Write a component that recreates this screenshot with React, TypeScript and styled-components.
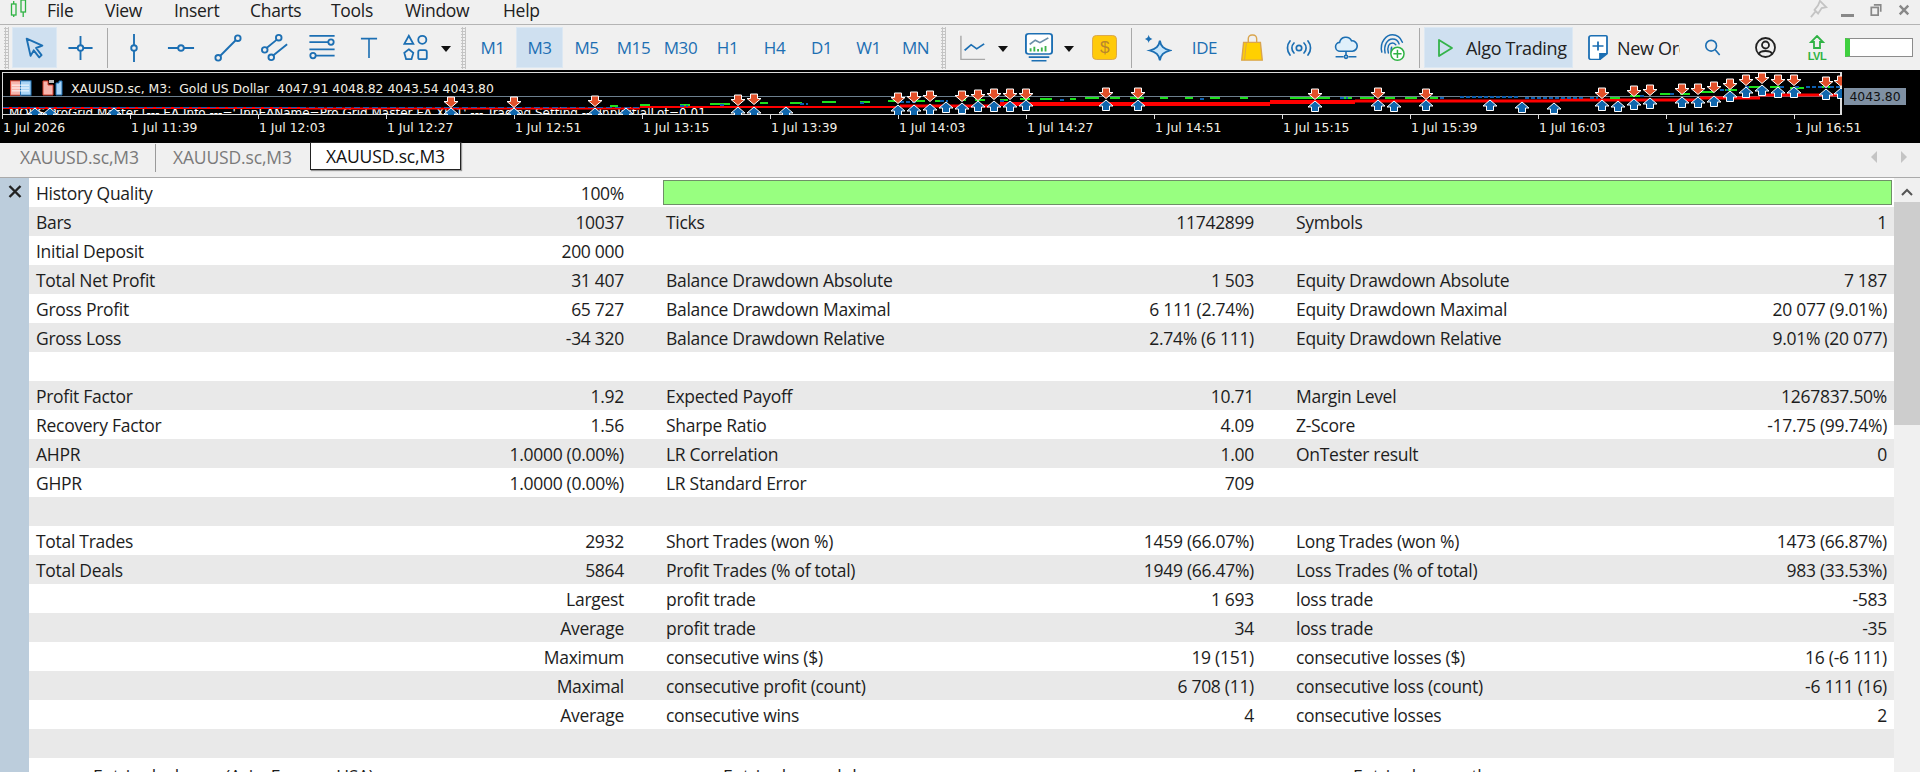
import React from "react";
import styled, { createGlobalStyle } from "styled-components";

const Global = createGlobalStyle`
  html, body { margin: 0; padding: 0; height: 772px; overflow: hidden; background: #f0f0f0; }
  #root { height: 772px; overflow: hidden; }
`;
const UI = `"Open Sans", "Noto Sans", sans-serif`;
const Page = styled.div`
  width: 1920px; height: 772px; overflow: hidden; display: flex; flex-direction: column;
  background: #f0f0f0; font-family: ${UI}; color: #1b1b1b;
`;
/* Menu */
const MenuBar = styled.div`
  height: 24px; flex: none; display: flex; align-items: center; position: relative; border-bottom: 1px solid #b4b4b4; background: #f0f0f0;
`;
const Logo = styled.svg` position: absolute; left: 10px; top: 0; `;
const MenuItem = styled.span<{ $w: number }>`
  flex: none; width: ${p => p.$w}px; font-size: 17.5px; letter-spacing: -0.3px; line-height: 19px; color: #202020;
`;
const MenuItems = styled.div` display: flex; padding-left: 47px; margin-top: -3px; `;
const WinBtns = styled.div` margin-left: auto; display: flex; align-items: center; gap: 16px; padding-right: 10px; margin-top: -4px; `;
const PinIcon = styled.svg` margin-right: -4px; margin-top: -2px; `;
/* Toolbar */
const Toolbar = styled.div`
  height: 45px; flex: none; display: flex; align-items: center; background: #f0f0f0;
`;
const Grip = styled.div<{ $l: number; $r: number }>`
  flex: none; width: 5px; height: 42px; margin: 0 ${p => p.$r}px 0 ${p => p.$l}px;
  background-image: radial-gradient(circle, #c4c4c4 1px, transparent 1.1px);
  background-size: 3px 3px;
`;
const Sep = styled.div`
  flex: none; width: 1px; height: 40px; margin: 0 2.5px; background: #a9a9a9;
`;
const Btn = styled.div<{ $w?: number; $active?: boolean; $mr?: number }>`
  flex: none; width: ${p => p.$w ?? 47}px; height: 41px; margin-right: ${p => p.$mr ?? 0}px;
  display: flex; align-items: center; justify-content: center;
  background: ${p => (p.$active ? "#cfe0f0" : "transparent")};
  box-shadow: ${p => (p.$active ? "inset 0 0 0 1px #dce8f3" : "none")};
  color: #1c6fb3; font-size: 17px; letter-spacing: -0.42px;
`;
const Caret = styled.div<{ $mr?: number }>`
  flex: none; width: 14px; margin-right: ${p => p.$mr ?? 0}px; display: flex; justify-content: center; margin-top: 2px;
  &::before { content: ""; border-left: 5.5px solid transparent; border-right: 5.5px solid transparent; border-top: 6px solid #111; }
`;
const AlgoBtn = styled.div`
  flex: none; width: 149px; height: 41px; margin-left: 2px; box-sizing: border-box; padding-left: 13px; gap: 12px;
  display: flex; align-items: center; background: #cfe0f0; box-shadow: inset 0 0 0 1px #dce8f3;
  font-size: 18px; letter-spacing: -0.35px; color: #222; white-space: nowrap;
`;
const OrderBtn = styled.div`
  flex: none; width: 114px; margin-left: 2px; padding-left: 13px; box-sizing: border-box; height: 41px; overflow: hidden;
  display: flex; align-items: center; gap: 9px; font-size: 18px; letter-spacing: -0.3px; color: #222; white-space: nowrap;
`;
const OrderClip = styled.span` display: block; width: 63px; overflow: hidden; `;
const LevelBar = styled.div`
  flex: none; width: 68px; height: 19px; box-sizing: border-box; border: 1px solid #8c8c8c; background: #fff; margin-left: 6px; border-left: 5px solid #3fd03f;
`;
/* Chart */
const Chart = styled.div`
  height: 73px; flex: none; background: #000; position: relative; overflow: hidden;
  font-family: "DejaVu Sans", sans-serif; font-size: 12.4px; color: #f4f0e6;
`;
const Plot = styled.div`
  margin: 2px 0 0 2px; width: 1840px; height: 43px; box-sizing: border-box; border: 1px solid #dcdcdc; border-right-width: 2px; position: relative; overflow: hidden;
`;
const ChartHead = styled.div`
  display: flex; align-items: center; height: 22px; margin-top: 4px; padding-left: 7px; white-space: pre; position: relative; z-index: 2;
`;
const HeadIcon = styled.svg<{ $mr: number }>` flex: none; margin-right: ${p => p.$mr}px; `;
const Ea = styled.div`
  position: absolute; left: 6px; top: 33px; white-space: pre; line-height: 14px; font-size: 12px; color: #fff;
`;
const Lines = styled.svg` position: absolute; left: 0; top: 0; `;
const PriceTag = styled.div`
  position: absolute; left: 1844px; top: 18px; width: 62px; height: 17px; background: #7f90a3; color: #111;
  font-size: 12.4px; line-height: 17px; text-align: center;
`;
const Axis = styled.div`
  display: flex; height: 28px; margin-left: 2px;
`;
const Tick = styled.div`
  flex: none; width: 128px; box-sizing: border-box; position: relative; padding: 6px 0 0 1px; white-space: nowrap; line-height: 14px;
  &::before { content: ""; position: absolute; left: 0; top: 0; width: 1px; height: 4px; background: #dcdcdc; }
`;
/* Tabs */
const TabBar = styled.div`
  height: 34px; flex: none; display: flex; align-items: flex-start; position: relative; border-bottom: 1px solid #aaa; background: #f0f0f0;
  font-size: 17.5px; letter-spacing: -0.15px;
`;
const Tab = styled.div<{ $w: number; $pl: number; $sep?: boolean }>`
  flex: none; width: ${p => p.$w}px; height: 28px; box-sizing: border-box; padding-left: ${p => p.$pl}px; line-height: 27px; color: #7a7a7a; margin-top: 1px;
  border-right: ${p => (p.$sep ? "1px solid #9a9a9a" : "1px solid transparent")};
`;
const ActiveTab = styled.div`
  flex: none; width: 151px; height: 28px; box-sizing: border-box; margin: -1px 0 0 0; text-align: center; line-height: 26px; background: #fff; color: #111;
  border: 1px solid #222; box-shadow: 1px 1px 1px #999;
`;
const TabArrows = styled.div` margin-left: auto; display: flex; gap: 22px; padding: 8px 13px 0 0; `;
/* Report */
const Body = styled.div` flex: 1; min-height: 0; display: flex; background: #fff; overflow: hidden; `;
const Side = styled.div`
  flex: none; width: 29px; background: #bccddc; position: relative;
`;
const CloseX = styled.svg` position: absolute; left: 8px; top: 7px; `;
const Report = styled.div` flex: 1; min-width: 0; `;
const Row = styled.div<{ $shade?: boolean }>`
  height: 29px; display: grid; grid-template-columns: 630px 630px 1fr; background: ${p => (p.$shade ? "#e9e9e9" : "#fff")};
  font-size: 17.5px; letter-spacing: -0.29px; line-height: 31px; color: #1d1d1d;
`;
const Cell = styled.div<{ $last?: boolean }>`
  display: flex; justify-content: space-between; padding: 0 ${p => (p.$last ? 7 : 35)}px 0 7px; white-space: nowrap; min-width: 0;
`;
const QualityBar = styled.div`
  grid-column: 2 / 4; margin: 2px 2px 2px 4px; background: #98ff80; border: 1px solid #6f8f68; box-sizing: border-box; height: 25px;
`;
const SectionTitle = styled.div`
  padding-left: 64px; white-space: nowrap; line-height: 37px;
`;
const Scroll = styled.div`
  flex: none; width: 26px; background: #f0f0f0; display: flex; flex-direction: column; align-items: center;
`;
const ScrollUp = styled.svg` flex: none; margin: 10px 0 6px; `;
const Thumb = styled.div` width: 100%; height: 223px; background: #cdcdcd; `;

const blue = "#1c6fb3";
const I = styled.svg` display: block; flex: none; `;

const Cursor = () => <I width="21" height="22" viewBox="0 0 26 28" fill="none" stroke={blue} strokeWidth="2.4" strokeLinejoin="round"><path d="M3 2 L23 11 L15 14 L22 23 L19 26 L12 17 L8 24 Z" /></I>;
const Cross = () => <I width="25" height="26" viewBox="0 0 26 28" fill="none" stroke={blue} strokeWidth="2"><circle cx="13" cy="14" r="3" /><path d="M0 14h10M16 14h10M13 1v10M13 17v10" /></I>;
const VLine = () => <I width="12" height="28" viewBox="0 0 12 30" fill="none" stroke={blue} strokeWidth="2"><circle cx="6" cy="15" r="3" /><path d="M6 0v12M6 18v12" /></I>;
const HLine = () => <I width="28" height="12" viewBox="0 0 30 12" fill="none" stroke={blue} strokeWidth="2"><circle cx="15" cy="6" r="3" /><path d="M1 6h11M18 6h11" /></I>;
const Trend = () => <I width="28" height="28" viewBox="0 0 30 30" fill="none" stroke={blue} strokeWidth="2"><circle cx="4.5" cy="25.5" r="3" /><circle cx="25.5" cy="4.5" r="3" /><path d="M7 23 L23 7" /></I>;
const Channel = () => <I width="28" height="28" viewBox="0 0 30 30" fill="none" stroke={blue} strokeWidth="2"><circle cx="4" cy="17" r="3" /><circle cx="19" cy="4" r="3" /><circle cx="11" cy="25" r="3" /><path d="M6 15 L17 6M13 23 L28 11" /></I>;
const Fibo = () => <I width="28" height="27" viewBox="0 0 30 30" fill="none" stroke={blue} strokeWidth="2"><circle cx="25" cy="9" r="3" /><circle cx="5" cy="24" r="3" /><path d="M1 2h28M1 9h21M1 17h28M8 24h21" /></I>;
const TextT = () => <I width="20" height="21" viewBox="0 0 22 26" fill="none" stroke={blue} strokeWidth="2"><path d="M1 2h20M11 2v24" /></I>;
const Shapes = () => <I width="26" height="27" viewBox="0 0 28 30" fill="none" stroke={blue} strokeWidth="2"><path d="M6 2 L11 11 L1 11 Z" /><circle cx="21" cy="6.5" r="4.5" /><path d="M6 17 L11 21 L9 28 L3 28 L1 21 Z" /><rect x="16.5" y="18" width="9.5" height="10" rx="2" /></I>;
const LineChart = () => <I width="26" height="26" viewBox="0 0 28 32" fill="none" preserveAspectRatio="none"><path d="M1 1v29h26" stroke="#a8a8a8" strokeWidth="1.5" /><path d="M5 19 L12 12 L18 17 L26 11" stroke={blue} strokeWidth="2" /></I>;
const Monitor = () => <I width="28" height="29" viewBox="0 0 30 36" fill="none" preserveAspectRatio="none"><rect x="1" y="1" width="28" height="25" rx="3" fill="#fff" stroke={blue} strokeWidth="2" /><path d="M5 14 L11 9 L16 12 L25 6" stroke="#6a8fa8" strokeWidth="2" /><path d="M6 23v-4M10 23v-6M14 23v-3M18 23v-5M22 23v-7" stroke="#3fb54a" strokeWidth="2" /><path d="M4 30h22M7 34.500h16" stroke={blue} strokeWidth="2" /></I>;
const Dollar = () => <I width="25" height="25" viewBox="0 0 26 26"><rect x="0.5" y="0.5" width="25" height="25" rx="4" fill="#ffca0a" stroke="#d9a54e" /><text x="13" y="19" textAnchor="middle" fontFamily="Liberation Sans" fontSize="18" fill="#b8862c">$</text></I>;
const Sparkle = () => <I width="28" height="28" viewBox="0 0 30 34" preserveAspectRatio="none"><path d="M17 8 C18 15 21 18 28 20 C21 22 18 25 17 32 C16 25 13 22 6 20 C13 18 16 15 17 8 Z" fill="#c5e5fb" stroke={blue} strokeWidth="2" /><path d="M5 1 C5.500 4 6.500 5 9 6 C6.500 7 5.500 8 5 11 C4.500 8 3.500 7 1 6 C3.500 5 4.500 4 5 1 Z" fill={blue} /></I>;
const Bag = () => <I width="24" height="28" viewBox="0 0 24 30" fill="none"><path d="M3 9 L21 9 L23 28 L1 28 Z" fill="#ffd000" stroke="#d9a54e" strokeWidth="1.500" /><path d="M6 9 L4 28" stroke="#d9a54e" /><path d="M8 9V5a4 4 0 0 1 4-4h1a4 4 0 0 1 4 4v4" stroke="#d9a54e" strokeWidth="1.500" /></I>;
const Signal = () => <I width="26" height="16" viewBox="0 0 26 16" fill="none" stroke={blue} strokeWidth="1.700" strokeLinecap="round"><circle cx="13" cy="8" r="2.700" /><path d="M8 3a7 7 0 0 0 0 10M18 3a7 7 0 0 1 0 10M4 1a11 11 0 0 0 0 14M22 1a11 11 0 0 1 0 14" /></I>;
const Cloud = () => <I width="26" height="24" viewBox="0 0 28 30" fill="none" stroke={blue} strokeWidth="2"><path d="M7 19 a5.500 5.500 0 0 1 -1 -11 a8 8 0 0 1 15 -2 a6.500 6.500 0 0 1 1 13 Z" fill="#dff0fb" /><path d="M14 19v6M1 26h10M17 26h10" /><circle cx="14" cy="26" r="2" /></I>;
const Finger = () => <I width="27" height="28" viewBox="0 0 30 34" fill="none"><g stroke={blue} strokeWidth="1.800" strokeLinecap="round"><path d="M2 22 C-1 9 8 1 15 1 C21 1 25 5 27 10" /><path d="M6 23 C4 13 9 6 15 6 C19 6 22 9 23 12" /><path d="M10 23 C8 15 11 11 15 11 C17 11 18 12 19 13" /><path d="M14 25 C13 20 13 18 14 16" /></g><circle cx="21" cy="24" r="8" fill="#fff" stroke="#2fb344" strokeWidth="1.800" /><path d="M21 19v10M16 24h10" stroke="#2fb344" strokeWidth="1.800" /></I>;
const Play = () => <I width="17" height="20" viewBox="0 0 17 20" fill="none"><path d="M2 2 L15 10 L2 18 Z" stroke="#34b34a" strokeWidth="1.800" strokeLinejoin="round" /></I>;
const NewOrder = () => <I width="20" height="26" viewBox="0 0 20 32" fill="none" stroke={blue} strokeWidth="1.800" preserveAspectRatio="none"><path d="M3 1h15a1 1 0 0 1 1 1v21l-7 7H3a2 2 0 0 1-2-2V3a2 2 0 0 1 2-2Z" fill="#fff" /><path d="M19 23h-7v7" fill={blue} /><path d="M10 8v11M4.500 13.500h11" /></I>;
const Search = () => <I width="17" height="17" viewBox="0 0 18 19" fill="none" stroke={blue} strokeWidth="1.800"><circle cx="7.500" cy="7.500" r="6" /><path d="M12 12 L17 18" /></I>;
const User = () => <I width="21" height="21" viewBox="0 0 21 21" fill="none" stroke="#222" strokeWidth="1.800"><circle cx="10.500" cy="10.500" r="9.500" /><circle cx="10.500" cy="8" r="3.500" /><path d="M4 17 C5 13 16 13 17 17" /></I>;
const Lvl = () => <I width="22" height="25" viewBox="0 0 22 25"><path d="M11 1 L17 7 L14 7 L14 13 L8 13 L8 7 L5 7 Z" fill="none" stroke="#2fb344" strokeWidth="1.800" /><text x="11" y="24.500" textAnchor="middle" fontFamily="Liberation Sans" fontSize="11" fontWeight="700" fill="#2fb344">LVL</text></I>;
const CandleLogo = () => <Logo width="18" height="18" viewBox="0 0 18 18" fill="none" stroke="#2fb344" strokeWidth="1.300"><rect x="1.500" y="4" width="4.500" height="11" /><path d="M3.700 1v3M3.700 15v2" /><rect x="11" y="0" width="4.500" height="12" /><path d="M13.200 12v5" /></Logo>;

const Menus: [string, number][] = [["File", 58], ["View", 69], ["Insert", 76], ["Charts", 81], ["Tools", 74], ["Window", 98], ["Help", 50]];
const times = ["1 Jul 2026", "1 Jul 11:39", "1 Jul 12:03", "1 Jul 12:27", "1 Jul 12:51", "1 Jul 13:15", "1 Jul 13:39", "1 Jul 14:03", "1 Jul 14:27", "1 Jul 14:51", "1 Jul 15:15", "1 Jul 15:39", "1 Jul 16:03", "1 Jul 16:27", "1 Jul 16:51"];

type M = [number, number | null, number];
/* x, top of down arrow (null if none), top of up arrow — page coordinates */
const marks: M[] = [
  [35, null, 108], [50, null, 108], [114, null, 108], [451, 97, 108], [514, 97, 108], [595, 96, 108], [626, null, 108],
  [738, 95, 107], [754, 94, 107], [786, null, 107],
  [898, 93, 105], [914, 92, 105], [930, 91, 104], [946, null, 102], [962, 91, 103], [978, 90, 101], [994, 89, 101], [1010, 89, 101], [1026, 89, 100],
  [1106, 88, 100], [1138, 88, 100],
  [1315, 89, 101], [1378, 88, 100], [1394, null, 101], [1426, 89, 100], [1490, null, 100], [1522, null, 102], [1554, null, 103],
  [1602, 88, 100], [1618, null, 101], [1634, 86, 99], [1650, 85, 98], [1682, 84, 97], [1698, 84, 97], [1714, 82, 96], [1730, 79, 91], [1746, 75, 87], [1762, 73, 85], [1778, 75, 87], [1794, 75, 87], [1826, 77, 89], [1841, 76, 88],
];
const Down = ({ x, y }: { x: number; y: number }) => <path d={`M${x - 3.5} ${y}h7v4.500h3.500L${x} ${y + 10.5}L${x - 7} ${y + 4.5}h3.500Z`} fill="#e2502a" stroke="#fff" strokeWidth="1" />;
const Up = ({ x, y }: { x: number; y: number }) => <path d={`M${x} ${y}L${x + 7} ${y + 6}h-3.500v4.500h-7v-4.500H${x - 7}Z`} fill="#0f66ad" stroke="#fff" strokeWidth="1" />;

const greenDash = "M610 106h8M640 105h10M680 105h10M710 104h20M760 103h8M790 103h12M822 102h14M860 102h10M888 101h12M915 101h10M935 101h8M960 100h6M975 100h10M1000 100h8M1020 99h10M1040 99h12M1070 99h6M1085 98h14M1110 98h10M1130 98h14M1160 98h8M1185 98h8M1210 98h10M1240 98h8M1290 98h40M1340 98h12M1360 98h14M1385 98h10M1405 98h12M1430 98h8M1610 98h10M1630 96h12M1660 94h10M1680 94h10M1700 92h14M1725 90h12M1745 87h16M1770 87h12M1790 88h14M1820 87h14";
const blueDash = "M680 106h8M720 105h6M800 104h8M860 103h6M900 102h16M940 101h8M1000 101h5M1060 100h6M1200 99h6M1340 98h8M1440 98h5M1460 97h60M1525 98h60M1590 98h8M1640 96h6M1670 94h6M1695 92h6M1720 90h8M1745 87h4M1760 87h4M1780 87h4M1795 87h4M1806 87h36";

const R: [string, string, string, string, string, string][] = [
  ["Bars", "10037", "Ticks", "11742899", "Symbols", "1"],
  ["Initial Deposit", "200 000", "", "", "", ""],
  ["Total Net Profit", "31 407", "Balance Drawdown Absolute", "1 503", "Equity Drawdown Absolute", "7 187"],
  ["Gross Profit", "65 727", "Balance Drawdown Maximal", "6 111 (2.74%)", "Equity Drawdown Maximal", "20 077 (9.01%)"],
  ["Gross Loss", "-34 320", "Balance Drawdown Relative", "2.74% (6 111)", "Equity Drawdown Relative", "9.01% (20 077)"],
  ["", "", "", "", "", ""],
  ["Profit Factor", "1.92", "Expected Payoff", "10.71", "Margin Level", "1267837.50%"],
  ["Recovery Factor", "1.56", "Sharpe Ratio", "4.09", "Z-Score", "-17.75 (99.74%)"],
  ["AHPR", "1.0000 (0.00%)", "LR Correlation", "1.00", "OnTester result", "0"],
  ["GHPR", "1.0000 (0.00%)", "LR Standard Error", "709", "", ""],
  ["", "", "", "", "", ""],
  ["Total Trades", "2932", "Short Trades (won %)", "1459 (66.07%)", "Long Trades (won %)", "1473 (66.87%)"],
  ["Total Deals", "5864", "Profit Trades (% of total)", "1949 (66.47%)", "Loss Trades (% of total)", "983 (33.53%)"],
  ["", "Largest", "profit trade", "1 693", "loss trade", "-583"],
  ["", "Average", "profit trade", "34", "loss trade", "-35"],
  ["", "Maximum", "consecutive wins ($)", "19 (151)", "consecutive losses ($)", "16 (-6 111)"],
  ["", "Maximal", "consecutive profit (count)", "6 708 (11)", "consecutive loss (count)", "-6 111 (16)"],
  ["", "Average", "consecutive wins", "4", "consecutive losses", "2"],
  ["", "", "", "", "", ""],
];

export default function App() {
  return (
    <Page>
      <Global />
      <MenuBar>
        <CandleLogo />
        <MenuItems>{Menus.map(([m, w]) => <MenuItem key={m} $w={w}>{m}</MenuItem>)}</MenuItems>
        <WinBtns>
          <PinIcon width="20" height="18" viewBox="0 0 20 20" fill="none" stroke="#c4c4c4" strokeWidth="2"><path d="M11 1 L18 8 L13 9 L9 15 L5 11 L9 6 Z M6 13 L1 19" /></PinIcon>
          <svg width="13" height="14" viewBox="0 0 13 14"><rect x="0" y="11" width="13" height="3" fill="#888" /></svg>
          <svg width="12" height="12" viewBox="0 0 13 14" fill="none" stroke="#888" strokeWidth="2"><rect x="1" y="4" width="8" height="9" /><path d="M4 1h8v8" /></svg>
          <svg width="12" height="12" viewBox="0 0 14 14" stroke="#888" strokeWidth="2.800"><path d="M2 2 L12 12 M12 2 L2 12" /></svg>
        </WinBtns>
      </MenuBar>
      <Toolbar>
        <Grip $l={4} $r={3} />
        <Btn $w={45} $active><Cursor /></Btn>
        <Btn><Cross /></Btn>
        <Sep />
        <Btn><VLine /></Btn><Btn><HLine /></Btn><Btn><Trend /></Btn><Btn><Channel /></Btn><Btn><Fibo /></Btn><Btn><TextT /></Btn><Btn><Shapes /></Btn>
        <Caret />
        <Grip $l={8} $r={3} />
        {["M1", "M3", "M5", "M15", "M30", "H1", "H4", "D1", "W1", "MN"].map(t => <Btn key={t} $w={47} $active={t === "M3"}>{t}</Btn>)}
        <Grip $l={2} $r={3} />
        <Btn><LineChart /></Btn><Caret $mr={5} />
        <Btn><Monitor /></Btn><Caret $mr={5} />
        <Btn><Dollar /></Btn>
        <Sep />
        <Btn><Sparkle /></Btn><Btn>IDE</Btn><Btn><Bag /></Btn><Btn><Signal /></Btn><Btn><Cloud /></Btn><Btn><Finger /></Btn>
        <Sep />
        <AlgoBtn><Play />Algo Trading</AlgoBtn>
        <OrderBtn><NewOrder /><OrderClip>New Order</OrderClip></OrderBtn>
        <Btn $w={46}><Search /></Btn>
        <Btn $w={60}><User /></Btn>
        <Btn $w={44}><Lvl /></Btn>
        <LevelBar />
      </Toolbar>
      <Chart>
        <Plot>
          <ChartHead>
            <HeadIcon $mr={10} width="22" height="16" viewBox="0 0 23 16"><rect x="0.500" y="0.500" width="11" height="15" fill="#f7b5ad" stroke="#d8412f" /><rect x="11" y="0.500" width="11" height="15" fill="#a9d4f5" stroke="#1c6fb3" /><path d="M2 5h18M2 8h18M2 11h18" stroke="#fff" /></HeadIcon>
            <HeadIcon $mr={8} width="21" height="16" viewBox="0 0 21 16"><path d="M1 1h5v4h5v10H1Z" fill="#f7b5ad" stroke="#d8412f" /><rect x="7" y="0" width="5" height="3" fill="#bbb" /><path d="M14 3h3V1h3v14h-6Z" fill="#a9d4f5" stroke="#1c6fb3" /></HeadIcon>
            <span>{"XAUUSD.sc, M3:  Gold US Dollar  4047.91 4048.82 4043.54 4043.80"}</span>
          </ChartHead>
          <Ea>{"MOUS ProGrid Master [--- EA Info ---=' InpEAName=Pro Grid Master EA X5 1' --- Trading Setting --- InpInitialLot=0.01"}</Ea>
        </Plot>
        <Lines width="1842" height="45" viewBox="0 70 1842 45" fill="none">
          <path d="M3 96.500H1841" stroke="#6c7f8e" />
          <path d="M3 108H300M300 108.500H640M640 107H900" stroke="#f00" strokeWidth="2" />
          <path d="M3 107.500H640" stroke="#1c55b0" strokeWidth="1" strokeDasharray="6 3" />
          <path d="M900 106H1000" stroke="#f00" strokeWidth="3" />
          <path d="M1000 104H1270M1270 102H1355" stroke="#f00" strokeWidth="4" />
          <path d="M1355 101H1560M1560 100H1700M1700 98H1760M1760 95H1841" stroke="#f00" strokeWidth="3" />
          <path d={greenDash} stroke="#1ee01e" strokeWidth="2" />
          <path d={blueDash} stroke="#0d5fb0" strokeWidth="2" strokeDasharray="4 2" />
          {marks.map(([x, d, u]) => <g key={x}>{d !== null && <Down x={x} y={d} />}<Up x={x} y={u} /></g>)}
        </Lines>
        <PriceTag>4043.80</PriceTag>
        <Axis>{times.map(t => <Tick key={t}>{t}</Tick>)}</Axis>
      </Chart>
      <TabBar>
        <Tab $w={156} $pl={20} $sep>XAUUSD.sc,M3</Tab>
        <Tab $w={154} $pl={17}>XAUUSD.sc,M3</Tab>
        <ActiveTab>XAUUSD.sc,M3</ActiveTab>
        <TabArrows>
          <svg width="7" height="12" viewBox="0 0 7 12"><path d="M6 0v12L0 6Z" fill="#c4c4c4" /></svg>
          <svg width="7" height="12" viewBox="0 0 7 12"><path d="M1 0v12l6-6Z" fill="#c4c4c4" /></svg>
        </TabArrows>
      </TabBar>
      <Body>
        <Side>
          <CloseX width="14" height="13" viewBox="0 0 14 13" stroke="#222" strokeWidth="2.400"><path d="M1.500 1 L12.500 12 M12.500 1 L1.500 12" /></CloseX>
        </Side>
        <Report>
          <Row>
            <Cell><span>History Quality</span><span>100%</span></Cell>
            <QualityBar />
          </Row>
          {R.map((r, i) => (
            <Row key={i} $shade={i % 2 === 0}>
              <Cell><span>{r[0]}</span><span>{r[1]}</span></Cell>
              <Cell><span>{r[2]}</span><span>{r[3]}</span></Cell>
              <Cell $last><span>{r[4]}</span><span>{r[5]}</span></Cell>
            </Row>
          ))}
          <Row>
            <SectionTitle>Entries by hours (Asia, Europe, USA)</SectionTitle>
            <SectionTitle>Entries by weekdays</SectionTitle>
            <SectionTitle>Entries by months</SectionTitle>
          </Row>
        </Report>
        <Scroll>
          <ScrollUp width="12" height="8" viewBox="0 0 12 8" fill="none" stroke="#555" strokeWidth="2"><path d="M1 7 L6 2 L11 7" /></ScrollUp>
          <Thumb />
        </Scroll>
      </Body>
    </Page>
  );
}
